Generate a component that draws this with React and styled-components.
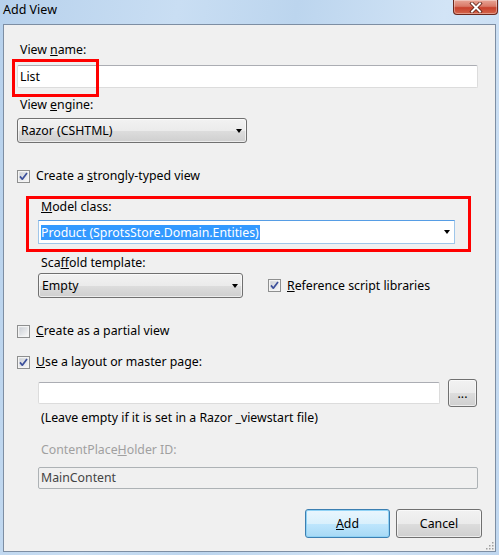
import React from 'react';
import styled, { createGlobalStyle } from 'styled-components';

const GlobalStyle = createGlobalStyle`
  html, body { margin: 0; padding: 0; }
  body {
    width: 499px;
    height: 555px;
    overflow: hidden;
    font-family: "Noto Sans", "Open Sans", sans-serif;
    font-size: 12.3px;
    color: #000;
  }
`;

const Window = styled.div`
  width: 499px;
  height: 555px;
  box-sizing: border-box;
  display: flex;
  flex-direction: column;
  background: linear-gradient(100deg, #b7d1ec 0%, #c9def3 30%, #bcd5ee 50%, #d2e4f6 75%, #c0d7ef 100%);
`;

const TitleBar = styled.div`
  height: 24px;
  display: flex;
  align-items: flex-start;
  padding-left: 3px;
`;

const Title = styled.div`
  font-size: 12.5px;
  line-height: 18px;
  padding-top: 1px;
  color: #000;
`;

const CloseButton = styled.div`
  margin-left: auto;
  margin-right: 1px;
  width: 45px;
  height: 15px;
  box-sizing: border-box;
  border: 1px solid #6b271c;
  border-top: none;
  border-radius: 0 0 4px 4px;
  background: linear-gradient(to bottom, #e8a596 0%, #d97a68 45%, #c8412c 55%, #d4664c 100%);
  box-shadow: inset 0 0 0 1px rgba(255, 255, 255, 0.35);
  display: flex;
  align-items: center;
  justify-content: center;
`;

const Client = styled.div`
  flex: 1;
  margin: 0 3px 3px 3px;
  border: 1px solid #7d8ea3;
  background: #f0f0f0;
  padding: 0 12px 0 13px;
  display: flex;
  flex-direction: column;
  position: relative;
`;

const Label = styled.div`
  line-height: 16px;
  margin-top: ${p => p.$mt || 0}px;
  margin-left: ${p => p.$ml || 3}px;
  color: ${p => (p.$disabled ? '#a0a0a0' : '#000')};
`;

const Field = styled.div`
  position: relative;
  margin-top: ${p => p.$mt || 0}px;
  margin-left: ${p => p.$ml || 0}px;
`;

const TextBox = styled.div`
  box-sizing: border-box;
  width: ${p => p.$w}px;
  height: ${p => p.$h || 23}px;
  border: 1px solid #dcdcdc;
  border-top-color: #abadb3;
  border-radius: 2px;
  background: ${p => (p.$disabled ? '#f0f0f0' : '#fff')};
  padding-left: 2px;
  line-height: ${p => (p.$h || 23) - 2}px;
  color: ${p => (p.$disabled ? '#444' : '#000')};
  ${p => p.$disabled && 'border-color: #adb2b5;'}
`;

const DropDown = styled.div`
  box-sizing: border-box;
  width: ${p => p.$w}px;
  height: 25px;
  border: 1px solid #707070;
  border-radius: 3px;
  background: linear-gradient(to bottom, #f2f2f2 0%, #ebebeb 50%, #dddddd 51%, #cfcfcf 100%);
  box-shadow: inset 0 0 0 1px rgba(255, 255, 255, 0.6);
  display: flex;
  align-items: center;
  padding: 0 4px 0 3px;
  line-height: 16px;
`;

const ComboBox = styled.div`
  box-sizing: border-box;
  width: ${p => p.$w}px;
  height: 24px;
  margin-top: 5px;
  border: 1px solid #9fc6ea;
  border-top-color: #569de5;
  background: #fff;
  display: flex;
  align-items: center;
  padding: 0 4px 0 2px;
`;

const Selected = styled.span`
  background: #3399ff;
  color: #fff;
  line-height: 15px;
  padding-right: 1px;
`;

const Arrow = styled.span`
  margin-left: auto;
  width: 0;
  height: 0;
  border-left: 3.5px solid transparent;
  border-right: 3.5px solid transparent;
  border-top: 4px solid #000;
`;

const CheckRow = styled.div`
  display: flex;
  align-items: center;
  gap: 6px;
  line-height: 16px;
  margin-top: ${p => p.$mt || 0}px;
  margin-left: ${p => p.$ml || 0}px;
`;

const Row = styled.div`
  display: flex;
  align-items: center;
  margin-top: ${p => p.$mt || 0}px;
  margin-left: ${p => p.$ml || 0}px;
  gap: ${p => p.$gap || 0}px;
`;

const Highlight = styled.div`
  position: absolute;
  left: ${p => p.$x}px;
  top: ${p => p.$y}px;
  width: ${p => p.$w}px;
  height: ${p => p.$h}px;
  box-sizing: border-box;
  border: 3px solid #ff0000;
  pointer-events: none;
`;

const Button = styled.button`
  box-sizing: border-box;
  width: ${p => p.$w || 85}px;
  height: ${p => p.$h || 29}px;
  padding: 0;
  font-family: inherit;
  font-size: 12.3px;
  color: #000;
  border-radius: 3px;
  border: 1px solid ${p => (p.$default ? '#3c7fb1' : '#707070')};
  background: ${p =>
    p.$default
      ? 'linear-gradient(to bottom, #eaf6fd 0%, #d9f0fc 50%, #bee6fd 51%, #a7d9f5 100%)'
      : 'linear-gradient(to bottom, #f2f2f2 0%, #ebebeb 50%, #dddddd 51%, #cfcfcf 100%)'};
  box-shadow: inset 0 0 0 1px ${p => (p.$default ? '#8fd2f5' : 'rgba(255,255,255,0.6)')};
`;

const ButtonBar = styled.div`
  display: flex;
  justify-content: flex-end;
  gap: 6px;
  margin-top: 20px;
  margin-right: 1px;
`;

const Grip = styled.svg`
  position: absolute;
  right: 1px;
  bottom: 1px;
`;

function CheckBox({ checked }) {
  return (
    <svg width="13" height="13" viewBox="0 0 13 13">
      <defs>
        <linearGradient id="cbg" x1="0" y1="0" x2="1" y2="1">
          <stop offset="0" stopColor="#cbcfd5" />
          <stop offset="1" stopColor="#f6f6f6" />
        </linearGradient>
      </defs>
      <rect x="0.5" y="0.5" width="12" height="12" fill="#f4f4f4" stroke="#8e8f8f" />
      <rect x="2" y="2" width="9" height="9" fill="url(#cbg)" stroke="#f4f4f4" strokeWidth="0.5" />
      {checked && (
        <path d="M3 6.4 L5.3 9.2 L10 3" fill="none" stroke="#3b4f9b" strokeWidth="1.7" strokeLinejoin="round" />
      )}
    </svg>
  );
}

export default function App() {
  return (
    <Window>
      <GlobalStyle />
      <TitleBar>
        <Title>Add View</Title>
        <CloseButton>
          <svg width="14" height="11" viewBox="0 0 14 11">
            <path d="M3 1.5 L11 9.5 M11 1.5 L3 9.5" stroke="#5a1f14" strokeWidth="3.6" strokeLinecap="square" />
            <path d="M3 1.5 L11 9.5 M11 1.5 L3 9.5" stroke="#fff" strokeWidth="2" strokeLinecap="square" />
          </svg>
        </CloseButton>
      </TitleBar>
      <Client>
        <Label $mt={17}>View <u>n</u>ame:</Label>
        <Field $mt={7}>
          <TextBox $w={461}>List</TextBox>
          <Highlight $x={-5} $y={-6} $w={87} $h={38} />
        </Field>
        <Label $mt={9}>View <u>e</u>ngine:</Label>
        <Field $mt={5}>
          <DropDown $w={230}>
            Razor (CSHTML)
            <Arrow />
          </DropDown>
        </Field>
        <CheckRow $mt={25}>
          <CheckBox checked />
          <span>Create a <u>s</u>trongly-typed view</span>
        </CheckRow>
        <Field $mt={15} $ml={21}>
          <Label><u>M</u>odel class:</Label>
          <ComboBox $w={417}>
            <Selected>Product (SprotsStore.Domain.Entities)</Selected>
            <Arrow />
          </ComboBox>
          <Highlight $x={-12} $y={-3} $w={445} $h={56} />
        </Field>
        <Label $mt={11} $ml={24}>Sca<u>f</u>fold template:</Label>
        <Row $mt={2} $ml={21} $gap={25}>
          <DropDown $w={205}>
            Empty
            <Arrow />
          </DropDown>
          <CheckRow>
            <CheckBox checked />
            <span><u>R</u>eference script libraries</span>
          </CheckRow>
        </Row>
        <CheckRow $mt={25}>
          <CheckBox />
          <span><u>C</u>reate as a partial view</span>
        </CheckRow>
        <CheckRow $mt={15}>
          <CheckBox checked />
          <span><u>U</u>se a layout or master page:</span>
        </CheckRow>
        <Row $mt={9} $ml={21} $gap={8}>
          <TextBox $w={402} $h={22} />
          <Button $w={29} $h={28}>...</Button>
        </Row>
        <Label $mt={3} $ml={24}>(Leave empty if it is set in a Razor _viewstart file)</Label>
        <Label $mt={16} $ml={24} $disabled>ContentPlace<u>H</u>older ID:</Label>
        <Field $mt={9} $ml={21}>
          <TextBox $w={440} $h={22} $disabled>MainContent</TextBox>
        </Field>
        <ButtonBar>
          <Button $default><u>A</u>dd</Button>
          <Button $w={86}>Cancel</Button>
        </ButtonBar>
        <Grip width="10" height="10" viewBox="0 0 10 10">
          {[[8, 2], [8, 5], [5, 5], [8, 8], [5, 8], [2, 8]].map(([x, y]) => (
            <rect key={`${x}-${y}`} x={x} y={y} width="1.5" height="1.5" fill="#a0a0a0" />
          ))}
        </Grip>
      </Client>
    </Window>
  );
}
